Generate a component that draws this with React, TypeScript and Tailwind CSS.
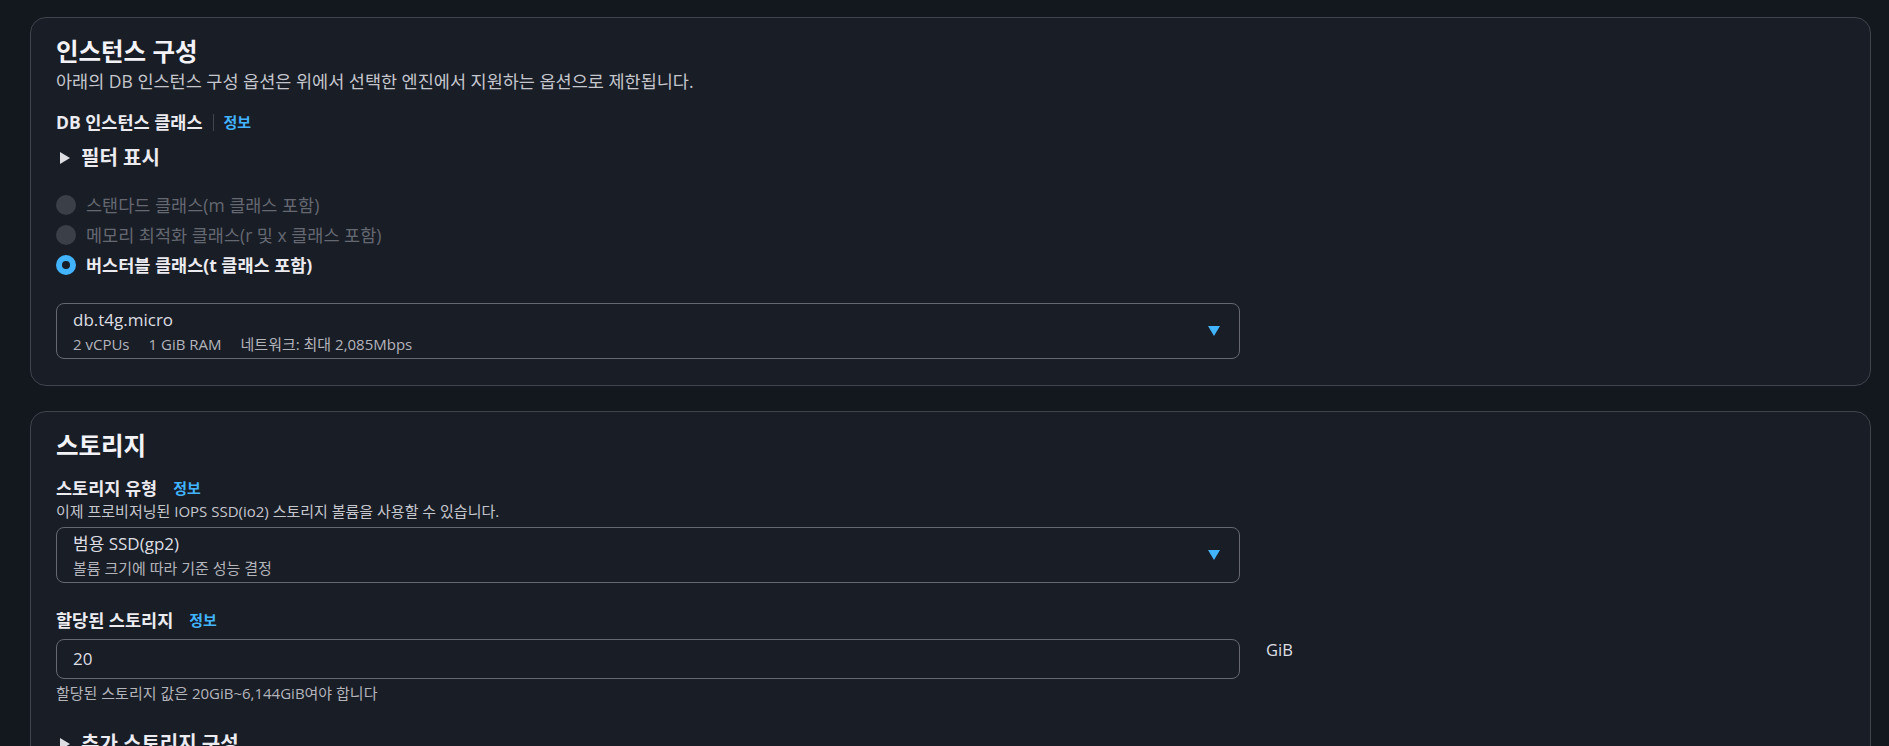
import React from "react";

function Radio({ label, checked }: { label: string; checked?: boolean }) {
  return (
    <div className="flex h-[30px] items-center">
      {checked ? (
        <span className="flex h-[20px] w-[20px] items-center justify-center rounded-full bg-[#42b4ff]">
          <span className="h-[8px] w-[8px] rounded-full bg-[#181d26]" />
        </span>
      ) : (
        <span className="h-[20px] w-[20px] rounded-full bg-[#3b3f48]" />
      )}
      <span
        className={
          checked
            ? "ml-[10px] text-[17.5px] font-bold leading-[22px] text-[#ebebf0]"
            : "ml-[10px] text-[17.5px] leading-[22px] text-[#656871]"
        }
      >
        {label}
      </span>
    </div>
  );
}

function Caret() {
  return (
    <svg width="12" height="10" viewBox="0 0 12 10" className="shrink-0">
      <path d="M0 0 H12 L6 10 Z" fill="#42b4ff" />
    </svg>
  );
}

function Expander({ label, className }: { label: string; className?: string }) {
  return (
    <div className={"flex h-[24px] items-center " + (className ?? "")}>
      <svg width="10" height="12" viewBox="0 0 10 12" className="ml-[4px] shrink-0">
        <path d="M0 0 L10 6 L0 12 Z" fill="#dedee3" />
      </svg>
      <span className="ml-[11px] text-[20px] font-bold leading-[24px] text-[#ebebf0]">{label}</span>
    </div>
  );
}

function Select({ value, children, className }: { value: string; children: React.ReactNode; className?: string }) {
  return (
    <div
      className={
        "flex h-[56px] w-[1184px] items-center rounded-[8px] border border-[#656871] pl-[16px] pr-[19px] " +
        (className ?? "")
      }
    >
      <div className="flex-1">
        <div className="text-[17px] leading-[24px] text-[#dedee3]">{value}</div>
        <div className="mt-[2px] flex gap-[19px] text-[15px] leading-[20px] text-[#b4b4bb]">{children}</div>
      </div>
      <Caret />
    </div>
  );
}

export default function App() {
  return (
    <div className="h-[746px] overflow-hidden bg-[#13181f] pl-[30px] pr-[18px] pt-[17px] font-['Open_Sans','Noto_Sans_CJK_KR',sans-serif]">
      <section className="rounded-[16px] border border-[#3f444d] bg-[#181d26] px-[25px] pb-[26px] pt-[20px]">
        <h2 className="text-[24.5px] font-bold leading-[28px] text-[#f3f3f7]">인스턴스 구성</h2>
        <p className="mt-[4px] text-[17.5px] leading-[22px] text-[#c6c6cd]">
          아래의 DB 인스턴스 구성 옵션은 위에서 선택한 엔진에서 지원하는 옵션으로 제한됩니다.
        </p>
        <div className="mt-[19px] flex h-[22px] items-center">
          <span className="text-[17.5px] font-bold leading-[22px] text-[#ebebf0]">DB 인스턴스 클래스</span>
          <span className="mx-[10px] h-[17px] w-px bg-[#424650]" />
          <span className="text-[15px] font-bold leading-[20px] text-[#42b4ff]">정보</span>
        </div>
        <Expander label="필터 표시" className="mt-[13px]" />
        <div className="mt-[20px] flex flex-col">
          <Radio label="스탠다드 클래스(m 클래스 포함)" />
          <Radio label="메모리 최적화 클래스(r 및 x 클래스 포함)" />
          <Radio label="버스터블 클래스(t 클래스 포함)" checked />
        </div>
        <Select value="db.t4g.micro" className="mt-[23px]">
          <span>2 vCPUs</span>
          <span>1 GiB RAM</span>
          <span>네트워크: 최대 2,085Mbps</span>
        </Select>
      </section>

      <section className="mt-[25px] rounded-[16px] border border-[#3f444d] bg-[#181d26] px-[25px] pb-[40px] pt-[20px]">
        <h2 className="text-[24.5px] font-bold leading-[28px] text-[#f3f3f7]">스토리지</h2>
        <div className="mt-[17px] flex h-[22px] items-center">
          <span className="text-[17.5px] font-bold leading-[22px] text-[#ebebf0]">스토리지 유형</span>
          <span className="ml-[16px] text-[15px] font-bold leading-[20px] text-[#42b4ff]">정보</span>
        </div>
        <p className="mt-[2px] text-[15px] leading-[20px] text-[#c6c6cd]">
          이제 프로비저닝된 IOPS SSD(io2) 스토리지 볼륨을 사용할 수 있습니다.
        </p>
        <Select value="범용 SSD(gp2)" className="mt-[6px]">
          <span>볼륨 크기에 따라 기준 성능 결정</span>
        </Select>
        <div className="mt-[26px] flex h-[22px] items-center">
          <span className="text-[17.5px] font-bold leading-[22px] text-[#ebebf0]">할당된 스토리지</span>
          <span className="ml-[16px] text-[15px] font-bold leading-[20px] text-[#42b4ff]">정보</span>
        </div>
        <div className="mt-[8px] flex items-start">
          <div className="flex h-[40px] w-[1184px] items-center rounded-[8px] border border-[#656871] pl-[16px] text-[17px] text-[#dedee3]">
            20
          </div>
          <span className="ml-[26px] text-[16.5px] leading-[22px] text-[#dedee3]">GiB</span>
        </div>
        <p className="mt-[4px] text-[15px] leading-[20px] text-[#b4b4bb]">
          할당된 스토리지 값은 20GiB~6,144GiB여야 합니다
        </p>
        <Expander label="추가 스토리지 구성" className="mt-[29px]" />
      </section>
    </div>
  );
}
